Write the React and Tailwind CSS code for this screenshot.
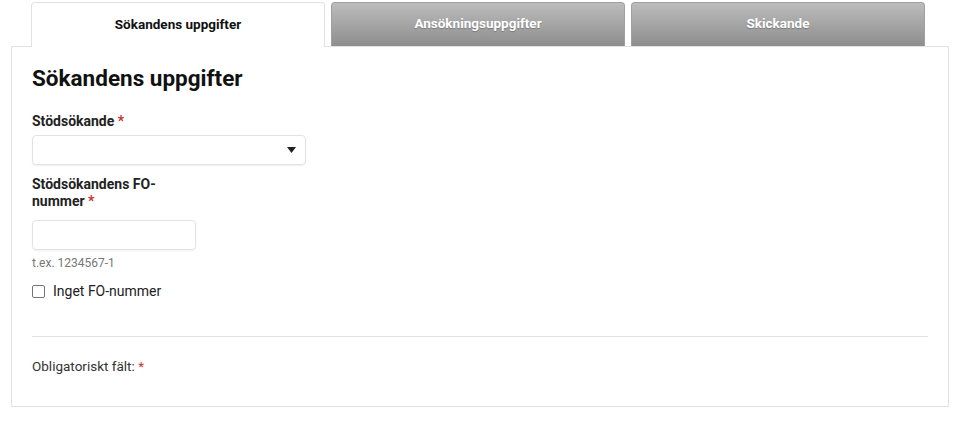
export default function App() {
  return (
    <div className="w-[964px] h-[423px] bg-white" style={{ fontFamily: "Roboto, 'Liberation Sans', sans-serif" }}>
      <div className="pl-[11px] pt-[2px] w-[949px]">
        <div className="flex gap-[6px] pl-[20px] relative z-10 h-[45px]">
          <div className="w-[294px] h-[45px] bg-white border border-b-0 border-[#e2e2e2] rounded-t-[4px] flex items-center justify-center">
            <span className="text-[13.5px] font-bold text-[#111] -mt-[2px]">Sökandens uppgifter</span>
          </div>
          <div className="w-[294px] h-[44px] rounded-t-[4px] border border-b-0 border-[#a0a0a0] bg-gradient-to-b from-[#bcbcbc] to-[#8e8e8e] flex items-center justify-center">
            <span className="text-[13.5px] font-bold text-white -mt-[2px]" style={{ textShadow: "0 1px 1px rgba(0,0,0,0.25)" }}>Ansökningsuppgifter</span>
          </div>
          <div className="w-[294px] h-[44px] rounded-t-[4px] border border-b-0 border-[#a0a0a0] bg-gradient-to-b from-[#bcbcbc] to-[#8e8e8e] flex items-center justify-center">
            <span className="text-[13.5px] font-bold text-white -mt-[2px]" style={{ textShadow: "0 1px 1px rgba(0,0,0,0.25)" }}>Skickande</span>
          </div>
        </div>
        <div className="-mt-px border border-[#e2e2e2] h-[361px] px-[20px] pt-[17px]">
          <h2 className="text-[22.5px] font-bold text-[#111] leading-[28px]">Sökandens uppgifter</h2>
          <div className="mt-[21px] text-[14px] font-bold text-[#222] leading-[16px]">
            Stödsökande <span className="text-[#c8322d]">*</span>
          </div>
          <div className="mt-[6px] w-[274px] h-[30px] rounded-[4px] border border-[#e2e2e2] shadow-[0_1px_2px_rgba(0,0,0,0.06)] flex items-center justify-end pr-[9px]">
            <svg width="9" height="6" viewBox="0 0 9 6"><path d="M0 0h9L4.5 6z" fill="#222" /></svg>
          </div>
          <div className="mt-[11px] text-[14px] font-bold text-[#222] leading-[17px]">
            Stödsökandens FO-<br />nummer <span className="text-[#c8322d]">*</span>
          </div>
          <div className="mt-[10px] w-[164px] h-[30px] rounded-[4px] border border-[#e2e2e2] shadow-[0_1px_2px_rgba(0,0,0,0.06)]"></div>
          <div className="mt-[6px] text-[12px] text-[#777] leading-[14px]">t.ex. 1234567-1</div>
          <label className="mt-[13px] flex items-center gap-[8px] text-[14px] text-[#222] leading-[16px]">
            <span className="w-[13px] h-[13px] rounded-[2px] border border-[#767676] bg-white inline-block"></span>
            Inget FO-nummer
          </label>
          <div className="mt-[37px] border-t border-[#e2e2e2]"></div>
          <div className="mt-[21px] text-[13.5px] text-[#333] leading-[16px]">
            Obligatoriskt fält: <span className="text-[#c8322d]">*</span>
          </div>
        </div>
      </div>
    </div>
  );
}
